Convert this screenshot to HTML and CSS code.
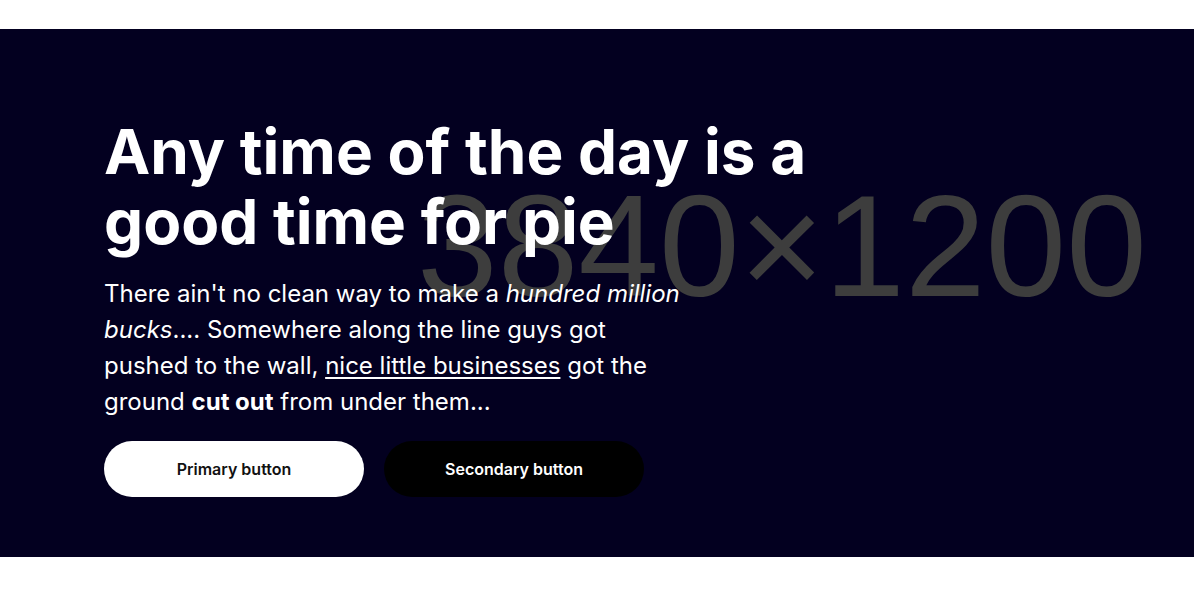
FILE: index.html
```html
<!DOCTYPE html>
<html lang="en">
<head>
<meta charset="utf-8">
<title>Hero</title>
<link rel="stylesheet" href="styles.css">
</head>
<body>
<div class="top-gap"></div>
<section class="hero">
  <div class="placeholder" aria-hidden="true">3840×1200</div>
  <div class="hero-content">
    <h1 class="hero-title">Any time of the day is a good time for pie</h1>
    <p class="hero-text">There ain't no clean way to make a <em>hundred million bucks</em>.... Somewhere along the line guys got pushed to the wall, <a href="#" class="hero-link">nice little businesses</a> got the ground <strong>cut out</strong> from under them...</p>
    <div class="hero-actions">
      <a href="#" class="btn btn-primary">Primary button</a>
      <a href="#" class="btn btn-secondary">Secondary button</a>
    </div>
  </div>
</section>
</body>
</html>
```
FILE: styles.css
```css
* { box-sizing: border-box; }
html, body { margin: 0; padding: 0; background: #ffffff; }
body { font-family: Inter, "Noto Sans", sans-serif; }

.top-gap { height: 29px; }

.hero {
  position: relative;
  overflow: hidden;
  background: #030020;
  height: 528px;
  padding: 88px 0 0 104px;
}

.placeholder {
  position: absolute;
  left: 417px;
  top: 137px;
  font-family: "Liberation Sans", Arial, sans-serif;
  font-size: 145px;
  line-height: 160px;
  color: #3d3d3d;
  white-space: nowrap;
  z-index: 0;
}

.hero-content {
  position: relative;
  z-index: 1;
  max-width: 760px;
  color: #ffffff;
}

.hero-title {
  margin: 0;
  font-size: 62px;
  line-height: 70px;
  font-weight: 700;
  letter-spacing: 0;
}

.hero-text {
  margin: 19px 0 0;
  max-width: 576px;
  font-size: 24px;
  line-height: 36px;
  font-weight: 400;
}

.hero-link { color: #ffffff; text-decoration: underline; text-underline-offset: 3px; }

.hero-actions {
  display: flex;
  gap: 20px;
  margin-top: 21px;
}

.btn {
  display: flex;
  align-items: center;
  justify-content: center;
  width: 260px;
  height: 56px;
  border-radius: 28px;
  font-size: 16px;
  font-weight: 600;
  text-decoration: none;
}

.btn-primary { background: #ffffff; color: #111111; }
.btn-secondary { background: #000000; color: #ffffff; }
```
